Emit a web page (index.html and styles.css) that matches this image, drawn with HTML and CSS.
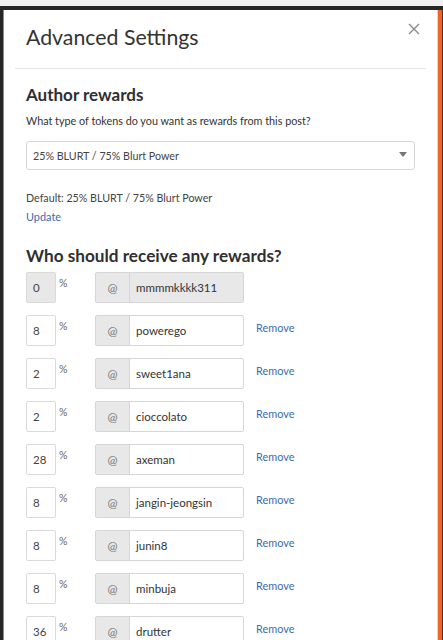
FILE: index.html
```html
<!DOCTYPE html>
<html>
<head>
<meta charset="utf-8">
<link rel="stylesheet" href="styles.css">
</head>
<body>
<div class="topstrip"></div>
<div class="stage">
  <div class="edge-left"></div>
  <div class="modal">
    <button class="close" aria-label="Close">
      <svg width="12" height="12" viewBox="0 0 12 12"><path d="M1 1L11 11M11 1L1 11" stroke="#8a8a8a" stroke-width="1.4" fill="none"/></svg>
    </button>
    <h1 class="title">Advanced Settings</h1>
    <hr class="divider">
    <h2 class="section">Author rewards</h2>
    <p class="help">What type of tokens do you want as rewards from this post?</p>
    <div class="select">
      <span>25% BLURT / 75% Blurt Power</span>
      <span class="caret"></span>
    </div>
    <p class="default">Default: 25% BLURT / 75% Blurt Power</p>
    <a class="link update">Update</a>
    <h2 class="section section2">Who should receive any rewards?</h2>
    <div class="rows">
      <div class="row">
        <div class="pct disabled">0</div><span class="sym">%</span>
        <div class="group"><span class="at">@</span><div class="user disabled">mmmmkkkk311</div></div>
      </div>
      <div class="row">
        <div class="pct">8</div><span class="sym">%</span>
        <div class="group"><span class="at">@</span><div class="user">powerego</div></div>
        <a class="link remove">Remove</a>
      </div>
      <div class="row">
        <div class="pct">2</div><span class="sym">%</span>
        <div class="group"><span class="at">@</span><div class="user">sweet1ana</div></div>
        <a class="link remove">Remove</a>
      </div>
      <div class="row">
        <div class="pct">2</div><span class="sym">%</span>
        <div class="group"><span class="at">@</span><div class="user">cioccolato</div></div>
        <a class="link remove">Remove</a>
      </div>
      <div class="row">
        <div class="pct">28</div><span class="sym">%</span>
        <div class="group"><span class="at">@</span><div class="user">axeman</div></div>
        <a class="link remove">Remove</a>
      </div>
      <div class="row">
        <div class="pct">8</div><span class="sym">%</span>
        <div class="group"><span class="at">@</span><div class="user">jangin-jeongsin</div></div>
        <a class="link remove">Remove</a>
      </div>
      <div class="row">
        <div class="pct">8</div><span class="sym">%</span>
        <div class="group"><span class="at">@</span><div class="user">junin8</div></div>
        <a class="link remove">Remove</a>
      </div>
      <div class="row">
        <div class="pct">8</div><span class="sym">%</span>
        <div class="group"><span class="at">@</span><div class="user">minbuja</div></div>
        <a class="link remove">Remove</a>
      </div>
      <div class="row">
        <div class="pct">36</div><span class="sym">%</span>
        <div class="group"><span class="at">@</span><div class="user">drutter</div></div>
        <a class="link remove">Remove</a>
      </div>
    </div>
  </div>
  <div class="edge-right"></div>
</div>
</body>
</html>
```
FILE: styles.css
```css
html, body {
  margin: 0;
  padding: 0;
  height: 640px;
  overflow: hidden;
  background: #262626;
  font-family: "Lato", "Open Sans", sans-serif;
  color: #333;
}
.topstrip {
  height: 6px;
  background: #f0f0f0;
}
.stage {
  display: flex;
  height: 634px;
  padding-top: 4px;
  box-sizing: border-box;
  background: #262626;
}
.edge-left {
  width: 3px;
  border-right: 1px solid #8a8a8a;
}
.edge-right {
  width: 4px;
  background: #f0642c;
  border-left: 1px solid #d8d8d8;
  border-right: 1px solid #5a3020;
}
.modal {
  position: relative;
  width: 433px;
  background: #fff;
  padding: 0 22px;
  box-sizing: border-box;
  overflow: hidden;
}
.close {
  position: absolute;
  right: 17px;
  top: 13px;
  border: 0;
  background: none;
  padding: 0;
  width: 12px;
  height: 12px;
  display: block;
}
.close svg { display: block; }
.title {
  margin: 12px 0 0;
  font-size: 21.3px;
  font-weight: 400;
  line-height: 30px;
  color: #333;
}
.divider {
  border: 0;
  border-top: 1px solid #e4e4e4;
  margin: 16px -11px 0;
}
.section {
  margin: 15px 0 0;
  font-size: 17px;
  font-weight: 700;
  line-height: 22px;
  color: #2f2f2f;
}
.help {
  margin: 7px 0 0;
  font-size: 10.8px;
  line-height: 16px;
  color: #333;
}
.select {
  margin-top: 12px;
  height: 29px;
  border: 1px solid #d6d6d6;
  border-radius: 3px;
  box-sizing: border-box;
  display: flex;
  align-items: center;
  justify-content: space-between;
  padding: 0 6px 0 6px;
  font-size: 10.7px;
  color: #444;
}
.caret {
  width: 0;
  height: 0;
  border-left: 4px solid transparent;
  border-right: 4px solid transparent;
  border-top: 5px solid #777;
  margin-right: 1px;
  margin-bottom: 2px;
}
.default {
  margin: 20px 0 0;
  font-size: 10.7px;
  line-height: 16px;
  color: #444;
}
.link {
  color: #3b6cb0;
  font-size: 10.9px;
  line-height: 16px;
  cursor: pointer;
}
.update {
  display: block;
  margin-top: 3px;
}
.section2 {
  margin-top: 20px;
  font-size: 17.2px;
}
.rows {
  margin-top: 5px;
  display: flex;
  flex-direction: column;
  gap: 12px;
}
.row {
  display: flex;
  align-items: flex-start;
  height: 31px;
}
.pct {
  width: 30px;
  height: 31px;
  box-sizing: border-box;
  border: 1px solid #dadada;
  border-radius: 2px;
  padding-left: 6px;
  display: flex;
  align-items: center;
  font-size: 11.5px;
  color: #444;
}
.disabled {
  background: #e8e8e8;
}
.sym {
  font-size: 10.5px;
  color: #666;
  margin: 5px 0 0 3px;
  width: 36px;
}
.group {
  display: flex;
  width: 149px;
  height: 31px;
  border: 1px solid #d6d6d6;
  border-radius: 2px;
  box-sizing: border-box;
  overflow: hidden;
}
.at {
  width: 33px;
  background: #e8e8e8;
  border-right: 1px solid #d6d6d6;
  display: flex;
  align-items: center;
  justify-content: center;
  font-size: 12px;
  color: #777;
}
.user {
  flex: 1;
  display: flex;
  align-items: center;
  padding-left: 6px;
  font-size: 11.5px;
  color: #333;
}
.remove {
  margin: 5px 0 0 12px;
}
```
